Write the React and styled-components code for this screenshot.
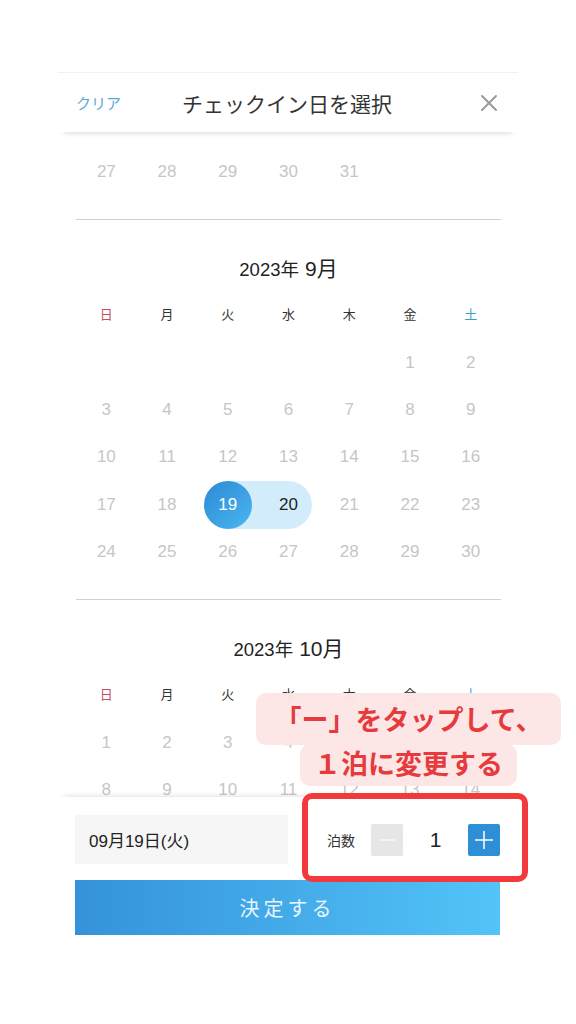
import React from 'react';
import styled, { createGlobalStyle } from 'styled-components';

const GlobalStyle = createGlobalStyle`
  html, body {
    margin: 0;
    padding: 0;
    background: #fff;
    font-family: "Liberation Sans", "Noto Sans CJK JP", sans-serif;
  }
`;

const Page = styled.div`
  position: relative;
  width: 576px;
  height: 1024px;
  overflow: hidden;
  background: #fff;
  padding-top: 72px;
  box-sizing: border-box;
`;

const Sheet = styled.div`
  width: 460px;
  margin: 0 auto;
  display: flex;
  flex-direction: column;
`;

const Header = styled.div`
  position: relative;
  z-index: 2;
  height: 60px;
  box-sizing: border-box;
  border-top: 1px solid #f1f1f1;
  display: flex;
  align-items: center;
  justify-content: space-between;
  padding: 0 20px 0 18px;
  box-shadow: 0 6px 6px -6px rgba(0, 0, 0, 0.22);
  background: #fff;
`;

const Clear = styled.span`
  font-size: 15px;
  color: #5ba8d0;
  width: 60px;
`;

const Title = styled.h1`
  margin: 0;
  font-size: 21px;
  font-weight: 400;
  color: #333;
  font-family: "Noto Sans CJK JP", sans-serif;
`;

const CloseBtn = styled.span`
  width: 60px;
  display: flex;
  justify-content: flex-end;
`;

const Scroll = styled.div`
  height: 665px;
  overflow: hidden;
  padding: 16.5px 17px 0 18px;
  box-sizing: border-box;
`;

const Grid = styled.div`
  display: grid;
  grid-template-columns: repeat(7, 1fr);
`;

const Cell = styled.div`
  position: relative;
  height: 47.25px;
  display: flex;
  align-items: center;
  justify-content: center;
  font-size: 17px;
  color: ${p => (p.$active ? '#222' : '#c6c6c6')};

  ${p => p.$start && `
    &::before {
      content: '';
      position: absolute;
      left: 50%;
      right: 0;
      top: 0;
      height: 48px;
      background: #d3ecfb;
    }
    &::after {
      content: '';
      position: absolute;
      left: calc(50% - 24px);
      top: 0;
      width: 48px;
      height: 48px;
      border-radius: 50%;
      background: linear-gradient(135deg, #2b8ad6, #4bb6ef);
    }
  `}

  ${p => p.$end && `
    &::before {
      content: '';
      position: absolute;
      left: 0;
      width: calc(50% + 24px);
      top: 0;
      height: 48px;
      border-radius: 0 24px 24px 0;
      background: #d3ecfb;
    }
  `}
`;

const DayNum = styled.span`
  position: relative;
  z-index: 1;
  color: ${p => (p.$light ? '#fff' : 'inherit')};
`;

const Divider = styled.div`
  height: 1px;
  background: #cfcfcf;
`;

const MonthBlock = styled.div`
  padding-bottom: 23.75px;
`;

const MonthTitle = styled.div`
  padding-top: 37px;
  height: 24px;
  line-height: 24px;
  text-align: center;
  color: #222;
  font-size: 18.5px;
  font-family: "Liberation Sans", "Noto Sans CJK JP", sans-serif;

  b {
    font-weight: 400;
    font-size: 21px;
    margin-left: 6px;
  }
`;

const WeekRow = styled(Grid)`
  margin-top: 6px;
  height: 52px;
`;

const Weekday = styled.div`
  display: flex;
  align-items: center;
  justify-content: center;
  font-size: 13px;
  font-family: "Noto Sans CJK JP", sans-serif;
  color: ${p => p.$color || '#333'};
`;

const LeadRows = styled.div`
  padding-bottom: 23.5px;
`;

const Footer = styled.div`
  position: relative;
  z-index: 2;
  background: #fff;
  box-shadow: 0 -6px 6px -6px rgba(0, 0, 0, 0.16);
  padding: 18px 18px 0 17px;
  height: 227px;
  box-sizing: border-box;
`;

const FooterRow = styled.div`
  display: flex;
  align-items: center;
  justify-content: space-between;
`;

const DateBox = styled.div`
  width: 213px;
  height: 49px;
  background: #f6f6f6;
  display: flex;
  align-items: center;
  padding-left: 14px;
  box-sizing: border-box;
  font-size: 17px;
  color: #222;
`;

const Nights = styled.div`
  display: flex;
  align-items: center;
`;

const NightsLabel = styled.span`
  font-size: 14px;
  color: #333;
  font-family: "Noto Sans CJK JP", sans-serif;
  margin-right: 16px;
`;

const StepBtn = styled.button`
  width: 32px;
  height: 32px;
  border: none;
  border-radius: 2px;
  padding: 0;
  display: flex;
  align-items: center;
  justify-content: center;
  background: ${p => (p.$primary ? '#2e8fd6' : '#e6e6e6')};
`;

const Count = styled.span`
  width: 65px;
  text-align: center;
  font-size: 21px;
  color: #222;
`;

const Submit = styled.button`
  margin-top: 16px;
  width: 100%;
  height: 55px;
  border: none;
  background: linear-gradient(90deg, #3592da, #52c4f8);
  color: #e8f5fd;
  font-size: 20px;
  letter-spacing: 4px;
  font-family: "Noto Sans CJK JP", sans-serif;
`;

const Highlight = styled.div`
  position: absolute;
  left: 302px;
  top: 793px;
  width: 226px;
  height: 89px;
  box-sizing: border-box;
  border: 6px solid #f23a3c;
  border-radius: 10px;
  z-index: 5;
`;

const Callout = styled.div`
  position: absolute;
  left: 255px;
  top: 693px;
  width: 307px;
  display: flex;
  flex-direction: column;
  align-items: center;
  z-index: 6;
`;

const Bubble = styled.div`
  background: rgba(253, 229, 229, 0.97);
  border-radius: 10px;
  color: #e63a3c;
  font-weight: 700;
  font-size: 27px;
  line-height: 38px;
  font-family: "Noto Sans CJK JP", sans-serif;
  padding: ${p => (p.$second ? '0 14px 4px' : '7px 19px 7px')};
  margin-top: ${p => (p.$second ? '-1px' : '0')};
  white-space: nowrap;
`;

const weekdays = [
  { t: '日', c: '#c44d5e' },
  { t: '月' },
  { t: '火' },
  { t: '水' },
  { t: '木' },
  { t: '金' },
  { t: '土', c: '#3a9fc4' },
];

const range = (a, b) => Array.from({ length: b - a + 1 }, (_, i) => a + i);

// only the part of October that shows above the footer
const months = [
  { year: 2023, month: 9, offset: 5, days: 30 },
  { year: 2023, month: 10, offset: 0, days: 14 },
];

const Days = ({ cells, month }) => (
  <Grid>
    {cells.map((d, i) => {
      const start = month === 9 && d === 19;
      const end = month === 9 && d === 20;
      return (
        <Cell key={i} $start={start} $end={end} $active={end}>
          {d && <DayNum $light={start}>{d}</DayNum>}
        </Cell>
      );
    })}
  </Grid>
);

const Month = ({ year, month, offset, days }) => {
  const cells = [...Array(offset).fill(null), ...range(1, days)];
  return (
    <>
      <Divider />
      <MonthBlock>
        <MonthTitle>
          {year}年<b>{month}月</b>
        </MonthTitle>
        <WeekRow>
          {weekdays.map(w => (
            <Weekday key={w.t} $color={w.c}>{w.t}</Weekday>
          ))}
        </WeekRow>
        <Days cells={cells} month={month} />
      </MonthBlock>
    </>
  );
};

export default function App() {
  return (
    <Page>
      <GlobalStyle />
      <Sheet>
        <Header>
          <Clear>クリア</Clear>
          <Title>チェックイン日を選択</Title>
          <CloseBtn>
            <svg width="18" height="18" viewBox="0 0 18 18">
              <path d="M2 2L16 16M16 2L2 16" stroke="#9a9a9a" strokeWidth="2" strokeLinecap="round" />
            </svg>
          </CloseBtn>
        </Header>
        <Scroll>
          <LeadRows>
            <Days cells={[27, 28, 29, 30, 31, null, null]} month={8} />
          </LeadRows>
          {months.map(m => (
            <Month key={m.month} {...m} />
          ))}
        </Scroll>
        <Footer>
          <FooterRow>
            <DateBox>09月19日(火)</DateBox>
            <Nights>
              <NightsLabel>泊数</NightsLabel>
              <StepBtn>
                <svg width="18" height="18" viewBox="0 0 18 18">
                  <path d="M1 9H17" stroke="#f7f7f7" strokeWidth="1.5" />
                </svg>
              </StepBtn>
              <Count>1</Count>
              <StepBtn $primary>
                <svg width="20" height="20" viewBox="0 0 20 20">
                  <path d="M1 10H19M10 1V19" stroke="#fff" strokeWidth="1.5" />
                </svg>
              </StepBtn>
            </Nights>
          </FooterRow>
          <Submit>決定する</Submit>
        </Footer>
      </Sheet>
      <Callout>
        <Bubble>「ー」をタップして、</Bubble>
        <Bubble $second>１泊に変更する</Bubble>
      </Callout>
      <Highlight />
    </Page>
  );
}
